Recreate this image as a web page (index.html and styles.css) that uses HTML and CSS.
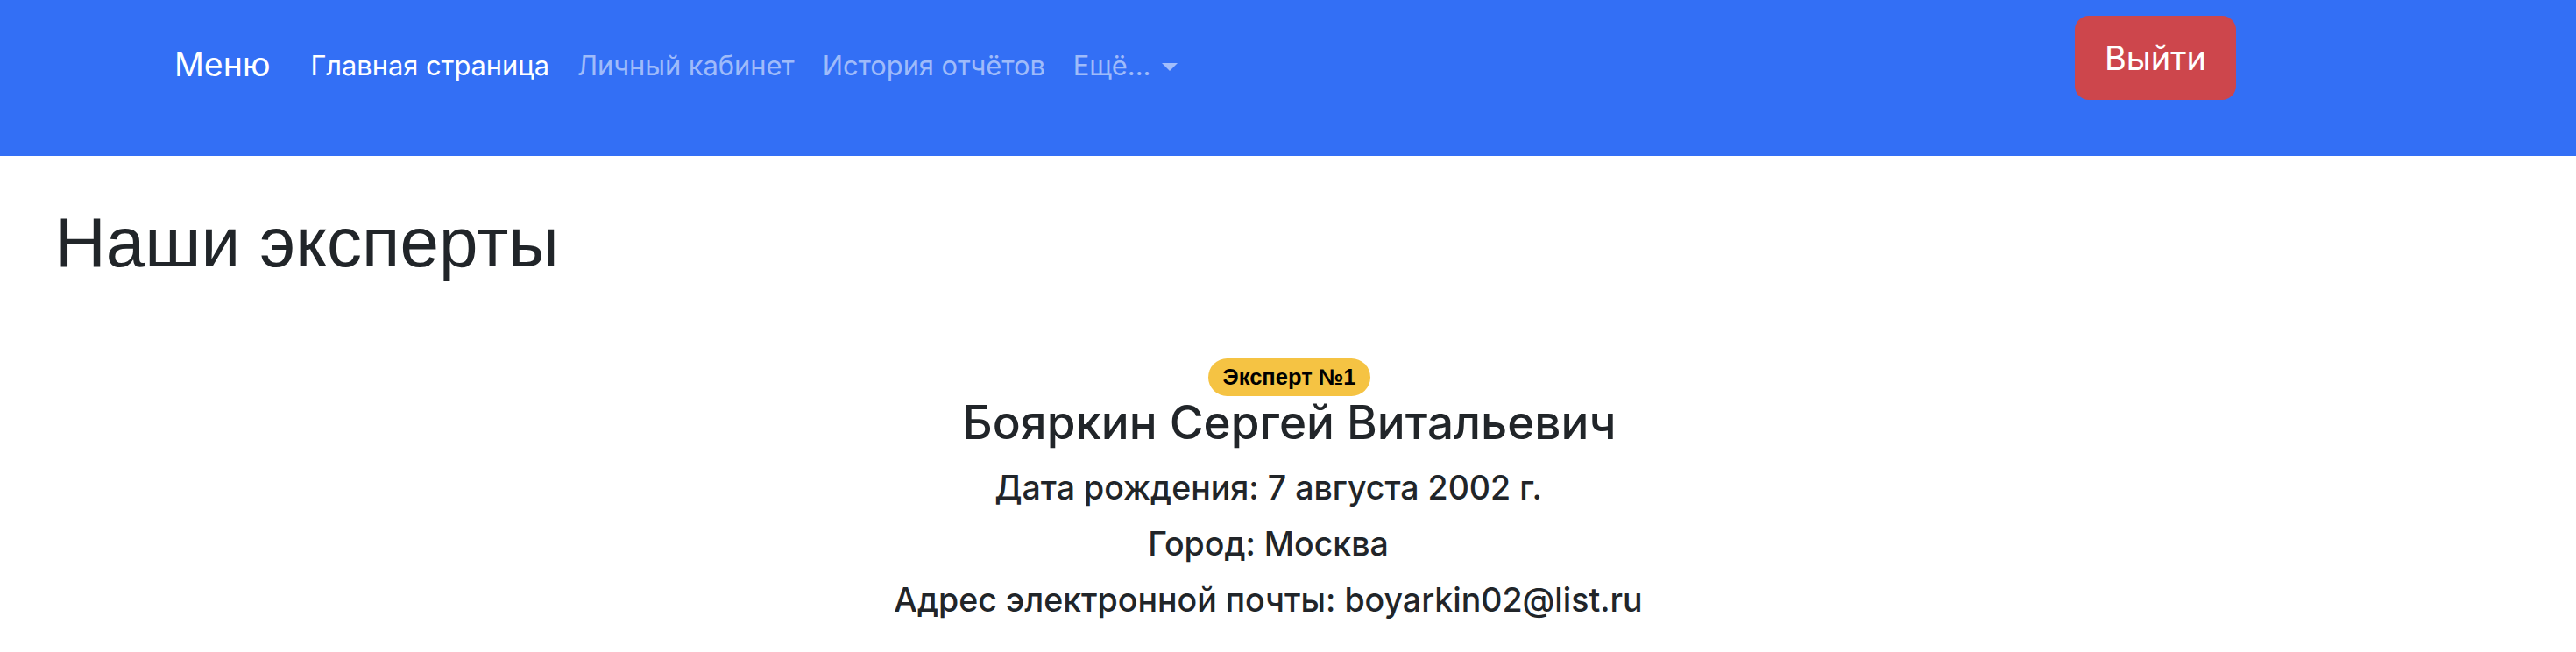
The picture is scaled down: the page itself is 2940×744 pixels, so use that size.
FILE: index.html
```html
<!DOCTYPE html>
<html lang="ru">
<head>
<meta charset="utf-8">
<title>Наши эксперты</title>
<link rel="stylesheet" href="styles.css">
</head>
<body>
<nav class="navbar">
  <a class="brand" href="#">Меню</a>
  <ul class="nav">
    <li><a class="nav-link active" href="#">Главная страница</a></li>
    <li><a class="nav-link" href="#">Личный кабинет</a></li>
    <li><a class="nav-link" href="#">История отчётов</a></li>
    <li><a class="nav-link dropdown" href="#">Ещё...<span class="caret"></span></a></li>
  </ul>
  <button class="btn-exit" type="button">Выйти</button>
</nav>
<main class="main">
  <h1 class="title">Наши эксперты</h1>
  <section class="expert">
    <span class="badge">Эксперт №1</span>
    <h3 class="name">Бояркин Сергей Витальевич</h3>
    <h5 class="info">Дата рождения: 7 августа 2002 г.</h5>
    <h5 class="info">Город: Москва</h5>
    <h5 class="info">Адрес электронной почты: boyarkin02@list.ru</h5>
  </section>
</main>
</body>
</html>
```
FILE: styles.css
```css
* { box-sizing: border-box; }
html, body { margin: 0; padding: 0; }
body {
  font-family: Inter, "Noto Sans", sans-serif;
  color: #212529;
  background: #fff;
}
.navbar {
  display: flex;
  align-items: flex-start;
  height: 178px;
  padding: 0 388px 0 199px;
  background: #336ff5;
}
.brand {
  margin-top: 44px;
  margin-right: 30px;
  font-size: 37.5px;
  line-height: 60px;
  color: #fff;
  text-decoration: none;
}
.nav {
  display: flex;
  list-style: none;
  margin: 51px 0 0 0;
  padding: 0;
}
.nav-link {
  display: block;
  padding: 0 16px;
  font-size: 30.8px;
  line-height: 48px;
  color: rgba(255, 255, 255, 0.55);
  text-decoration: none;
}
.nav-link.active { color: #fff; }
.caret {
  display: inline-block;
  margin-left: 13px;
  vertical-align: 5px;
  border-top: 9.6px solid rgba(255, 255, 255, 0.55);
  border-left: 9.6px solid transparent;
  border-right: 9.6px solid transparent;
}
.btn-exit {
  margin: 18px 0 0 auto;
  padding: 16px 32px;
  border: 2px solid #cd464c;
  border-radius: 16px;
  background: #cd464c;
  color: #fff;
  font-family: Inter, "Noto Sans", sans-serif;
  font-size: 38px;
  line-height: 60px;
}
.main {
  padding: 51px 60px 0 63px;
}
.title {
  margin: 0 0 16px 0;
  font-family: "Liberation Sans", Arial, sans-serif;
  font-weight: 400;
  font-size: 80px;
  line-height: 96px;
}
.expert {
  display: flex;
  flex-direction: column;
  align-items: center;
  padding-top: 68px;
}
.badge {
  display: inline-block;
  padding: 0.35em 0.65em;
  border-radius: 50px;
  background: #f5c343;
  color: #000;
  font-family: "Liberation Sans", Arial, sans-serif;
  font-weight: 700;
  font-size: 25.5px;
  line-height: 1;
}
.name {
  margin: -3px 0 16px 0;
  font-weight: 500;
  font-size: 53px;
  line-height: 67.2px;
}
.info {
  margin: 0 0 16px 0;
  padding-right: 48px;
  font-weight: 500;
  font-size: 37.5px;
  line-height: 48px;
}
```
